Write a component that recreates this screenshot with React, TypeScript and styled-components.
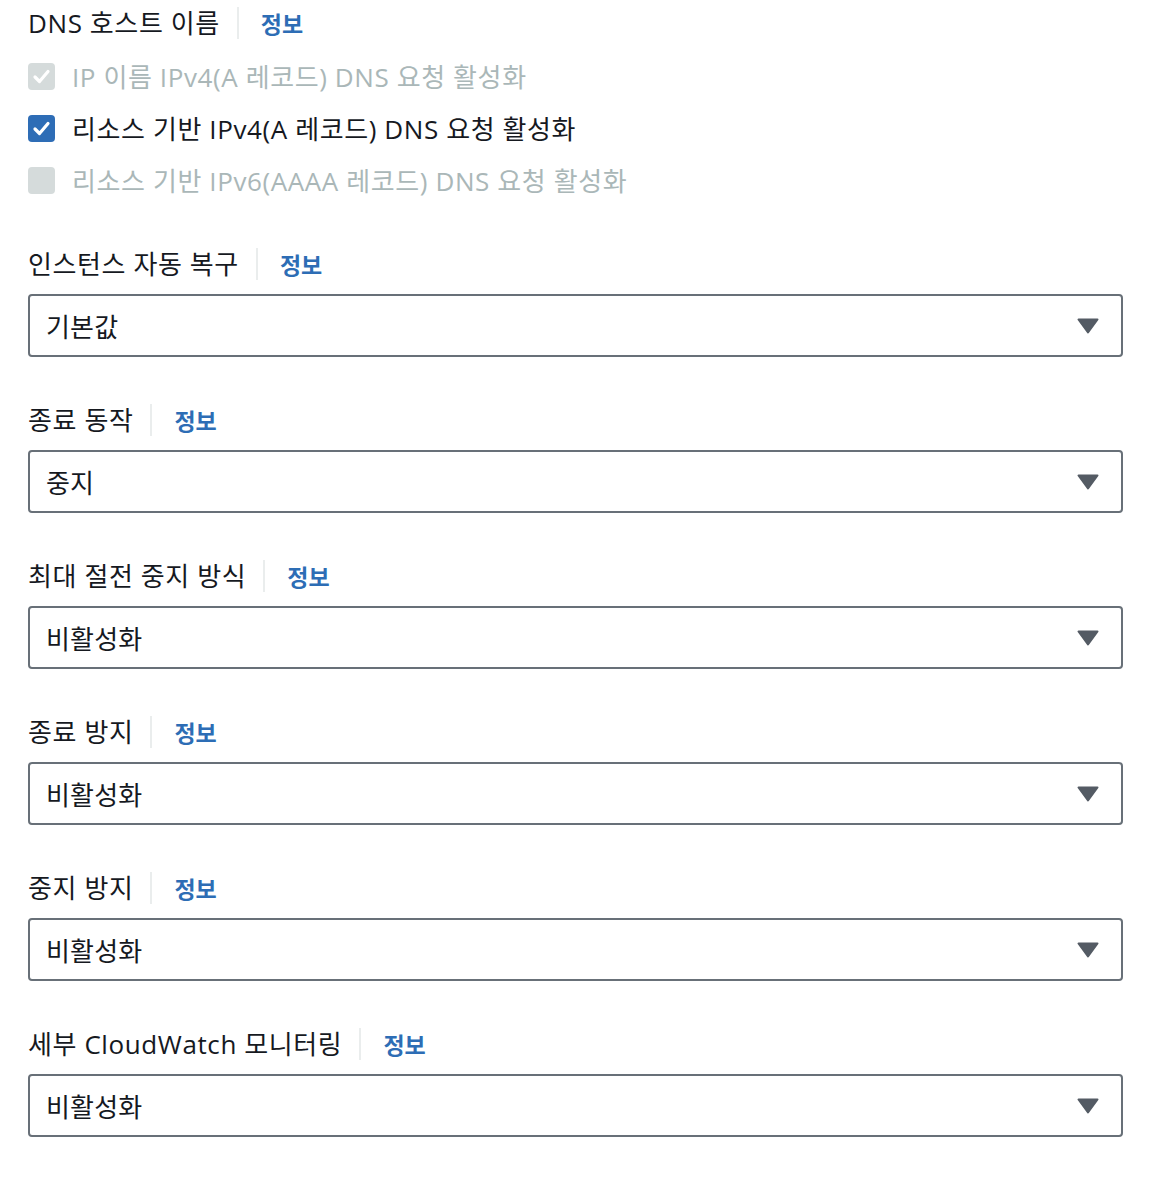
import React from "react";
import styled, { createGlobalStyle } from "styled-components";

const Global = createGlobalStyle`
  html, body { margin: 0; padding: 0; background: #ffffff; }
  body {
    font-family: "Open Sans", "Noto Sans CJK KR", sans-serif;
    color: #16191f;
    -webkit-font-smoothing: antialiased;
  }
`;

const Page = styled.div`
  width: 1095px;
  padding: 7px 0 40px 28px;
  display: flex;
  flex-direction: column;
`;

const LabelRow = styled.div`
  display: flex;
  align-items: center;
  height: 32px;
`;

const LabelText = styled.span`
  font-size: 26px;
  line-height: 32px;
  letter-spacing: 0.6px;
  color: #16191f;
  padding-right: 17px;
`;

const Divider = styled.span`
  width: 2px;
  height: 32px;
  background: #eaeded;
`;

const Info = styled.a`
  font-family: "Noto Sans CJK KR", sans-serif;
  font-size: 23px;
  font-weight: 700;
  color: #2d6db5;
  padding-left: 22px;
  line-height: 32px;
  text-decoration: none;
`;

const CheckList = styled.div`
  display: flex;
  flex-direction: column;
  margin-top: 11px;
`;

const CheckRow = styled.label<{ $disabled?: boolean }>`
  display: flex;
  align-items: center;
  gap: 17px;
  height: 52px;
  font-size: 26px;
  letter-spacing: 0.6px;
  color: ${(p) => (p.$disabled ? "#aab7b8" : "#16191f")};
`;

const Box = styled.span<{ $checked?: boolean; $disabled?: boolean }>`
  width: 27px;
  height: 27px;
  border-radius: 4px;
  flex: none;
  display: flex;
  align-items: center;
  justify-content: center;
  background: ${(p) => (p.$disabled ? "#d5dbdb" : p.$checked ? "#2e6db6" : "#ffffff")};
`;

const Field = styled.div<{ $first?: boolean }>`
  display: flex;
  flex-direction: column;
  gap: 14px;
  margin-top: ${(p) => (p.$first ? "42px" : "47px")};
`;

const Select = styled.div`
  box-sizing: border-box;
  height: 63px;
  border: 2px solid #687078;
  border-radius: 4px;
  display: flex;
  align-items: center;
  justify-content: space-between;
  padding: 0 22px 0 16px;
  font-size: 26px;
  letter-spacing: 0.2px;
  color: #16191f;
`;

const Check = () => (
  <svg width="19" height="19" viewBox="0 0 19 19">
    <path d="M3 10 L7.5 14.5 L16 4.5" fill="none" stroke="#fff" strokeWidth="3.2" strokeLinecap="round" strokeLinejoin="round" />
  </svg>
);

const Caret = () => (
  <svg width="22" height="16" viewBox="0 0 22 16">
    <path d="M1.5 1.5 H20.5 L11 14.5 Z" fill="#545b64" stroke="#545b64" strokeWidth="2" strokeLinejoin="round" />
  </svg>
);

const Label = ({ text }: { text: string }) => (
  <LabelRow>
    <LabelText>{text}</LabelText>
    <Divider />
    <Info>정보</Info>
  </LabelRow>
);

const fields = [
  { label: "인스턴스 자동 복구", value: "기본값" },
  { label: "종료 동작", value: "중지" },
  { label: "최대 절전 중지 방식", value: "비활성화" },
  { label: "종료 방지", value: "비활성화" },
  { label: "중지 방지", value: "비활성화" },
  { label: "세부 CloudWatch 모니터링", value: "비활성화" },
];

export default function App() {
  return (
    <>
      <Global />
      <Page>
        <Label text="DNS 호스트 이름" />
        <CheckList>
          <CheckRow $disabled>
            <Box $checked $disabled>
              <Check />
            </Box>
            IP 이름 IPv4(A 레코드) DNS 요청 활성화
          </CheckRow>
          <CheckRow>
            <Box $checked>
              <Check />
            </Box>
            리소스 기반 IPv4(A 레코드) DNS 요청 활성화
          </CheckRow>
          <CheckRow $disabled>
            <Box $disabled />
            리소스 기반 IPv6(AAAA 레코드) DNS 요청 활성화
          </CheckRow>
        </CheckList>
        {fields.map((f, i) => (
          <Field key={f.label} $first={i === 0}>
            <Label text={f.label} />
            <Select>
              <span>{f.value}</span>
              <Caret />
            </Select>
          </Field>
        ))}
      </Page>
    </>
  );
}
